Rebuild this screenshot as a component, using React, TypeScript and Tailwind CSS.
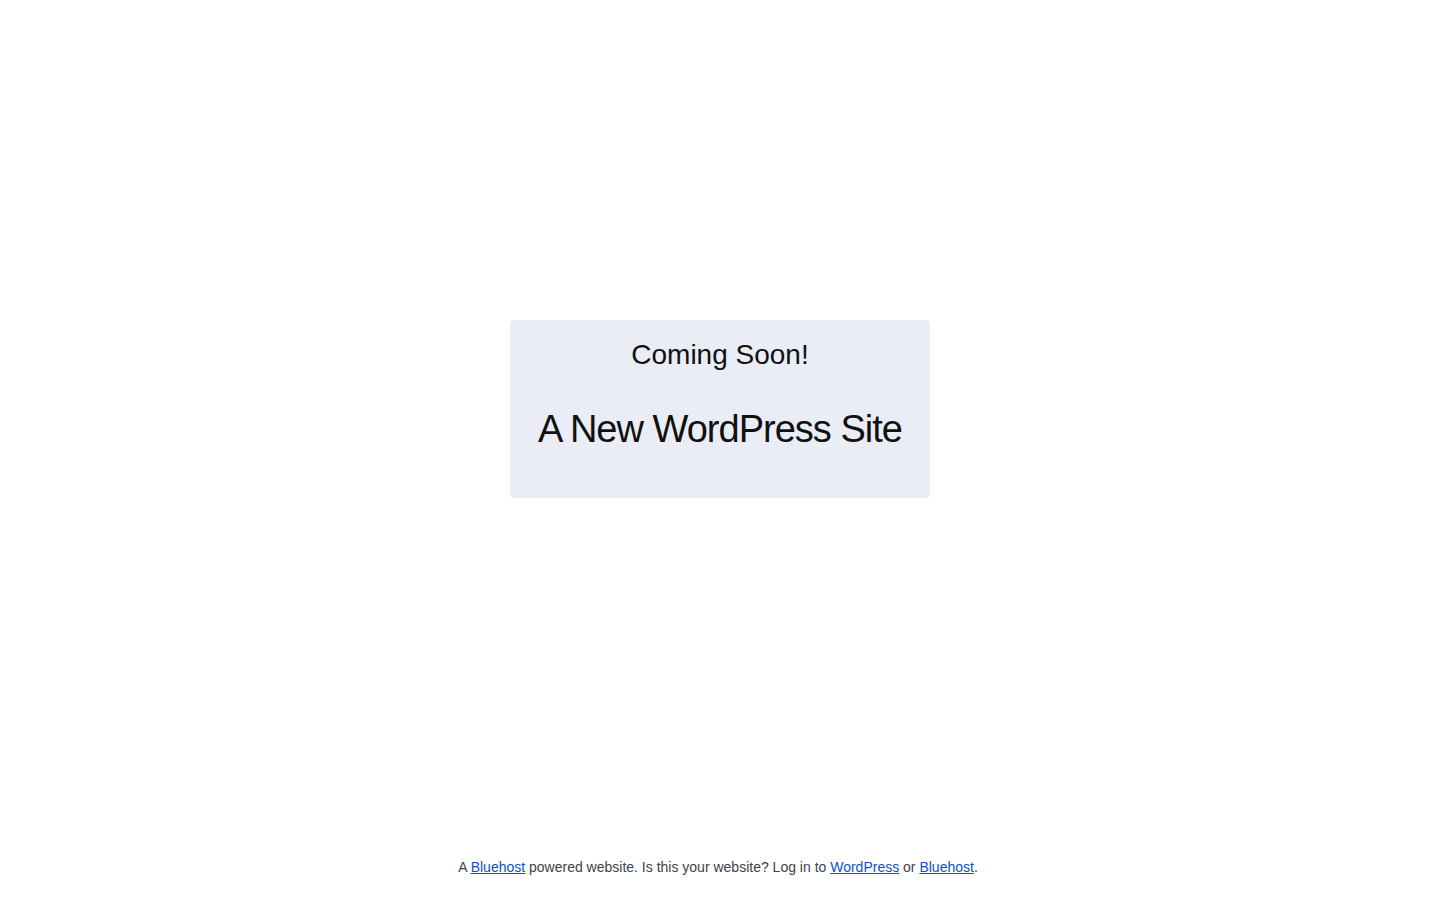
import React from 'react';

const App: React.FC = () => {
  return (
    <div className="min-h-screen flex flex-col bg-white font-['Liberation_Sans',Arial,sans-serif] text-[#111]">
      {/* Coming soon card */}
      <main className="flex-1 flex items-center justify-center">
        <div className="w-[420px] rounded-[4px] bg-[#eaedf5] px-6 pt-[19px] pb-[47px] text-center">
          <h2 className="text-[28px] leading-[32px]">Coming Soon!</h2>
          <h1 className="mt-[36px] text-[38px] leading-[44px] tracking-[-0.026em]">A New WordPress Site</h1>
        </div>
      </main>

      {/* Footer */}
      <footer className="pt-[39px] pb-[23px] pr-1 text-center text-[14px] leading-[20px] text-[#3c434a]">
        A <a href="#" className="text-[#0a52c9] underline">Bluehost</a> powered website. Is this your website? Log in to{' '}
        <a href="#" className="text-[#0a52c9] underline">WordPress</a> or{' '}
        <a href="#" className="text-[#0a52c9] underline">Bluehost</a>.
      </footer>
    </div>
  );
};

export default App;
